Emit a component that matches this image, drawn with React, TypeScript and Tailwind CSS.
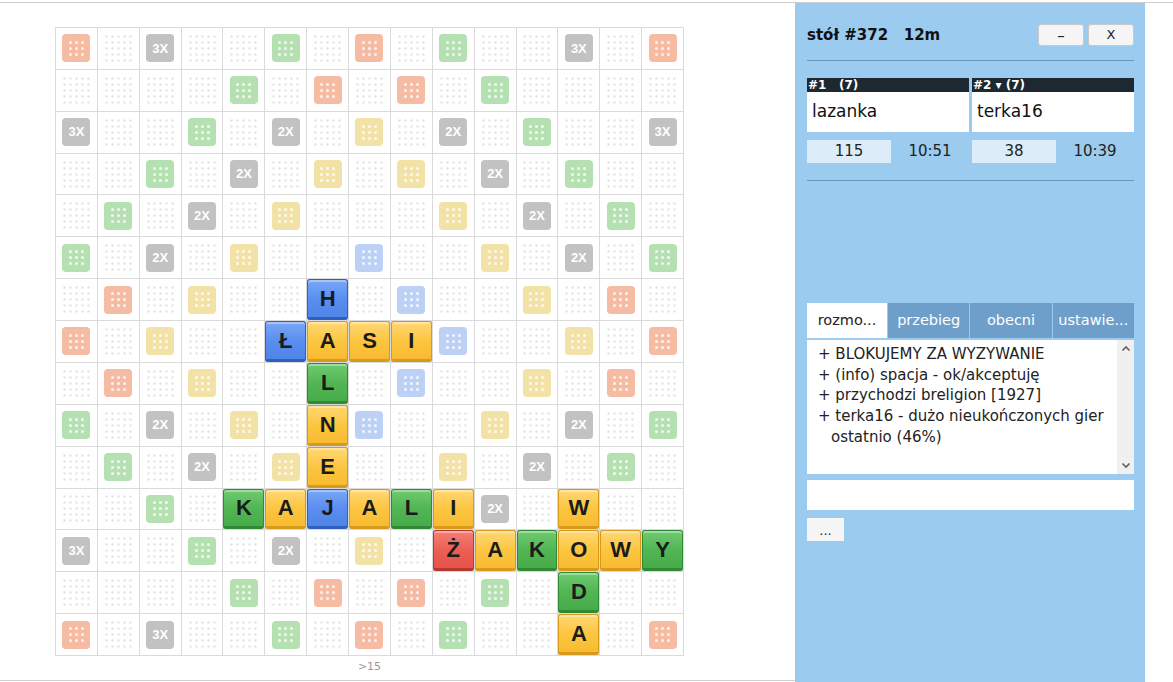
import React from 'react';

const layout = [
  'r.t..g.r.g..t.r',
  '....g.r.r.g....',
  't..g.d.y.d.g..t',
  '..g.d.y.y.d.g..',
  '.g.d.y...y.d.g.',
  'g.d.y..b..y.d.g',
  '.r.y..b.b..y.r.',
  'r.y..b...b..y.r',
  '.r.y..b.b..y.r.',
  'g.d.y..b..y.d.g',
  '.g.d.y...y.d.g.',
  '..g.d.y.y.d.g..',
  't..g.d.y.d.g..t',
  '....g.r.r.g....',
  'r.t..g.r.g..t.r',
];

type TileColor = 'y' | 'g' | 'b' | 'r';

const tiles: Record<string, [string, TileColor]> = {
  '6,6': ['H', 'b'],
  '7,5': ['Ł', 'b'],
  '7,6': ['A', 'y'],
  '7,7': ['S', 'y'],
  '7,8': ['I', 'y'],
  '8,6': ['L', 'g'],
  '9,6': ['N', 'y'],
  '10,6': ['E', 'y'],
  '11,4': ['K', 'g'],
  '11,5': ['A', 'y'],
  '11,6': ['J', 'b'],
  '11,7': ['A', 'y'],
  '11,8': ['L', 'g'],
  '11,9': ['I', 'y'],
  '11,12': ['W', 'y'],
  '12,9': ['Ż', 'r'],
  '12,10': ['A', 'y'],
  '12,11': ['K', 'g'],
  '12,12': ['O', 'y'],
  '12,13': ['W', 'y'],
  '12,14': ['Y', 'g'],
  '13,12': ['D', 'g'],
  '14,12': ['A', 'y'],
};

const tileStyle: Record<TileColor, string> = {
  y: 'bg-gradient-to-b from-[#ffd773] via-[#fcc640] to-[#f8bb30] border-[#d9991c]',
  g: 'bg-gradient-to-b from-[#6fcb70] via-[#52b655] to-[#47ab4a] border-[#2f8a33]',
  b: 'bg-gradient-to-b from-[#7aa6f7] via-[#5a8ff0] to-[#4f84e8] border-[#2f5fc0]',
  r: 'bg-gradient-to-b from-[#f57f75] via-[#ec5f55] to-[#e5524a] border-[#b7372f]',
};

const premiumStyle: Record<string, string> = {
  r: 'bg-[#f6bca3]',
  g: 'bg-[#b4e0b2]',
  y: 'bg-[#f3e2a6]',
  b: 'bg-[#bdd0f6]',
  t: 'bg-[#c2c2c2]',
  d: 'bg-[#c2c2c2]',
};

const Dots = () => (
  <div className="grid grid-cols-3 gap-[3px]">
    {Array.from({ length: 9 }).map((_, i) => (
      <div key={i} className="w-[3px] h-[3px] rounded-full bg-white/80" />
    ))}
  </div>
);

const Cell = ({ r, c }: { r: number; c: number }) => {
  const tile = tiles[`${r},${c}`];
  if (tile) {
    return (
      <div
        className={`flex items-center justify-center rounded-[3px] border border-b-[3px] shadow-[inset_0_2px_0_rgba(255,255,255,0.35)] text-[22px] font-bold text-[#1b1b1b] ${tileStyle[tile[1]]}`}
        style={{ fontFamily: '"Liberation Sans", Arial, sans-serif' }}
      >
        {tile[0]}
      </div>
    );
  }
  const p = layout[r][c];
  return (
    <div className="bg-white flex items-center justify-center">
      {p === '.' ? (
        <div className="w-[29px] h-[29px] bg-[radial-gradient(circle,#dedede_1px,transparent_1.4px)] bg-[length:6px_6px] bg-center" />
      ) : (
        <div
          className={`w-[28px] h-[28px] rounded-[4px] flex items-center justify-center ${premiumStyle[p]}`}
        >
          {p === 't' || p === 'd' ? (
            <span
              className="text-white text-[13px] font-bold"
              style={{ fontFamily: '"Liberation Sans", Arial, sans-serif' }}
            >
              {p === 't' ? '3X' : '2X'}
            </span>
          ) : (
            <Dots />
          )}
        </div>
      )}
    </div>
  );
};

const Board = () => (
  <div className="grid grid-cols-[repeat(15,1fr)] grid-rows-[repeat(15,1fr)] w-[629px] h-[629px] gap-px p-px bg-[#dadada]">
    {layout.map((row, r) =>
      row.split('').map((_, c) => <Cell key={`${r}-${c}`} r={r} c={c} />)
    )}
  </div>
);

const Player = ({ head, name, score, time }: { head: string; name: string; score: string; time: string }) => (
  <div className="flex-1">
    <div className="bg-[#1d2830] text-white text-[12px] font-bold h-[14px] leading-[14px] pl-[1px] whitespace-pre">
      {head}
    </div>
    <div className="bg-white h-[40px] flex items-center pl-[5px] text-[17px] text-[#111]">{name}</div>
    <div className="flex mt-[8px] h-[23px] text-[15px] text-[#222]">
      <div className="w-[84px] bg-[#dcedf9] flex items-center justify-center">{score}</div>
      <div className="flex-1 flex items-center justify-center">{time}</div>
    </div>
  </div>
);

const App = () => {
  return (
    <div
      className="w-[1173px] h-[682px] bg-white overflow-hidden"
      style={{ fontFamily: '"DejaVu Sans", Verdana, sans-serif' }}
    >
      <div className="mt-[2px] border-t border-[#cfcfcf] flex">
        <div className="w-[795px] h-[678px] border-b border-[#cfcfcf] pl-[55px] pt-[24px]">
          <Board />
          <div className="w-[629px] text-center text-[11px] text-[#9a9a9a] mt-[3px]">&gt;15</div>
        </div>
        <div className="w-[350px] h-[679px] bg-[#9bcbee] pl-[12px] pr-[11px]">
          <div className="flex items-center justify-between pt-[21px] h-[43px]">
            <div className="text-[15px] font-bold text-[#111] whitespace-pre">stół #372   12m</div>
            <div className="flex gap-[4px]">
              <button className="w-[46px] h-[22px] bg-[#f5f5f5] border border-[#c9c9c9] rounded-[3px] text-[15px] text-[#222]">
                –
              </button>
              <button className="w-[46px] h-[22px] bg-[#f5f5f5] border border-[#c9c9c9] rounded-[3px] text-[13px] text-[#222]">
                X
              </button>
            </div>
          </div>
          <div className="mt-[14px] border-t border-[#6f95b6]" />
          <div className="flex gap-[3px] mt-[17px]">
            <Player head="#1   (7)" name="lazanka" score="115" time="10:51" />
            <Player head="#2 ▾ (7)" name="terka16" score="38" time="10:39" />
          </div>
          <div className="mt-[17px] border-t border-[#6f95b6]" />
          <div className="mt-[122px] flex gap-px text-[14.5px] h-[35px]">
            <div className="w-[80px] bg-white text-[#222] flex items-center justify-center">rozmo...</div>
            <div className="flex-1 bg-[#6e9fca] text-white flex items-center justify-center">przebieg</div>
            <div className="flex-1 bg-[#6e9fca] text-white flex items-center justify-center">obecni</div>
            <div className="flex-1 bg-[#6e9fca] text-white flex items-center justify-center">ustawie...</div>
          </div>
          <div className="mt-[2px] h-[134px] bg-white flex">
            <div className="flex-1 pl-[11px] pt-[4px] text-[15px] leading-[20.7px] text-[#222]">
              <div>+ BLOKUJEMY ZA WYZYWANIE</div>
              <div>+ (info) spacja - ok/akceptuję</div>
              <div>+ przychodzi breligion [1927]</div>
              <div className="pl-[13px] -indent-[13px]">+ terka16 - dużo nieukończonych gier ostatnio (46%)</div>
            </div>
            <div className="w-[17px] bg-[#f0f0f0] flex flex-col items-center justify-between py-[4px] text-[#555]">
              <svg width="10" height="10" viewBox="0 0 10 10">
                <path d="M1.5 6.5 L5 3 L8.5 6.5" fill="none" stroke="#606060" strokeWidth="1.6" />
              </svg>
              <svg width="10" height="10" viewBox="0 0 10 10">
                <path d="M1.5 3.5 L5 7 L8.5 3.5" fill="none" stroke="#606060" strokeWidth="1.6" />
              </svg>
            </div>
          </div>
          <div className="mt-[6px] h-[30px] bg-white" />
          <button className="mt-[8px] w-[37px] h-[23px] bg-[#f5f5f5] text-[13px] text-[#222] flex items-end justify-center pb-[4px] leading-none">
            ...
          </button>
        </div>
      </div>
    </div>
  );
};

export default App;
